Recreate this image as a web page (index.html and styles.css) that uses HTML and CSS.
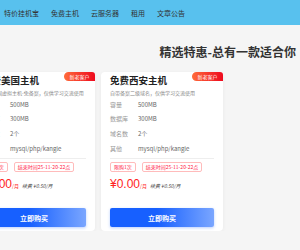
FILE: index.html
```html
<!DOCTYPE html>
<html>
<head>
  <meta charset="utf-8" />
  <title>精选特惠</title>
  <link rel="stylesheet" href="styles.css">
</head>
<body>
  <!-- Navigation -->
  <div class="nav">
    <a>特价挂机宝</a>
    <a>免费主机</a>
    <a>云服务器</a>
    <a>租用</a>
    <a>文章公告</a>
  </div>

  <div class="main">
    <h2 class="section-title">精选特惠-总有一款适合你</h2>

    <div class="cards">
      <div class="card">
        <span class="badge">新老客户</span>
        <h3>免费美国主机</h3>
        <p class="desc">免费美国虚拟主机-免备案，仅供学习交流使用</p>
        <div class="row"><span class="k">容量</span><span class="v">500MB</span></div>
        <div class="row"><span class="k">数据库</span><span class="v">300MB</span></div>
        <div class="row"><span class="k">域名数</span><span class="v">2个</span></div>
        <div class="row"><span class="k">其他</span><span class="v">mysql/php/kangle</span></div>
        <div class="tags">
          <span class="tag">限购1次</span>
          <span class="tag">结束时间25-11-20-22点</span>
        </div>
        <div class="price">
          <span class="num">¥0.00</span><span class="unit">/月</span>
          <span class="renew">续费 ¥0.50/月</span>
        </div>
        <button class="buy">立即购买</button>
      </div>

      <div class="card">
        <span class="badge">新老客户</span>
        <h3>免费西安主机</h3>
        <p class="desc">自带备案二级域名，仅供学习交流使用</p>
        <div class="row"><span class="k">容量</span><span class="v">500MB</span></div>
        <div class="row"><span class="k">数据库</span><span class="v">300MB</span></div>
        <div class="row"><span class="k">域名数</span><span class="v">2个</span></div>
        <div class="row"><span class="k">其他</span><span class="v">mysql/php/kangle</span></div>
        <div class="tags">
          <span class="tag">限购1次</span>
          <span class="tag">结束时间25-11-20-22点</span>
        </div>
        <div class="price">
          <span class="num">¥0.00</span><span class="unit">/月</span>
          <span class="renew">续费 ¥0.50/月</span>
        </div>
        <button class="buy">立即购买</button>
      </div>
    </div>
  </div>
</body>
</html>
```

FILE: styles.css
```css
/* Grundlayout */
html, body {
  margin: 0;
  padding: 0;
  font-family: "Noto Sans CJK SC", "Noto Sans", sans-serif;
  background: #f5f5f5;
  overflow: hidden;
}

/* Navigation oben */
.nav {
  display: flex;
  align-items: center;
  gap: 12px;
  height: 25px;
  padding-left: 4px;
  background: #58c1ee;
  font-size: 7px;
  color: #333;
}

.section-title {
  margin: 21px 4px 0 0;
  font-size: 12px;
  line-height: 12px;
  font-weight: 700;
  color: #333;
  text-align: right;
}

/* Karten */
.cards {
  display: flex;
  gap: 6px;
  margin: 14px 0 0 -27px;
}

.card {
  position: relative;
  display: flex;
  flex-direction: column;
  flex: none;
  width: 122px;
  height: 159px;
  padding: 2px 9px 0;
  box-sizing: border-box;
  background: #fff;
  border-radius: 4px;
  box-shadow: 0 1px 4px rgba(0, 0, 0, 0.05);
}

.badge {
  position: absolute;
  top: 0;
  right: 0;
  width: 31px;
  height: 9px;
  line-height: 9px;
  font-size: 5px;
  color: #fff;
  text-align: center;
  background: linear-gradient(90deg, #ff6b3b, #ee0a1e);
  border-radius: 6px 4px 0 6px;
}

.card h3 {
  margin: 0;
  font-size: 9.5px;
  line-height: 12px;
  font-weight: 600;
  color: #222;
}

.desc {
  margin: 3px 0 0;
  font-size: 5px;
  line-height: 8px;
  color: #888;
  white-space: nowrap;
}

.row {
  display: flex;
  height: 14.6px;
  align-items: center;
  font-size: 6px;
}

.row .k {
  width: 28px;
  color: #999;
}

.row .v {
  color: #666;
}

.tags {
  display: flex;
  gap: 6px;
  margin-top: 3px;
  padding-top: 3px;
  border-top: 1px solid #eee;
}

.tag {
  height: 8px;
  line-height: 8px;
  padding: 0 3px;
  font-size: 5px;
  color: #f24;
  border: 0.5px solid #fbb;
  border-radius: 2px;
  white-space: nowrap;
}

.price {
  display: flex;
  align-items: baseline;
  margin-top: 5px;
  line-height: 14px;
  color: #f22;
}

.price .num {
  font-family: "Liberation Sans", "Noto Sans CJK SC", sans-serif;
  font-size: 12px;
}

.price .unit {
  font-size: 5px;
  margin-right: 3px;
}

.price .renew {
  font-size: 5px;
  font-style: italic;
  color: #444;
}

/* Kauf-Button */
.buy {
  margin-top: auto;
  margin-bottom: 4px;
  height: 19px;
  padding: 0;
  font-family: inherit;
  font-size: 7px;
  font-weight: 700;
  color: #fff;
  border: none;
  border-radius: 2px;
  background: linear-gradient(90deg, #1760ff 45%, #7aa6ff);
  box-shadow: 0 1px 3px rgba(23, 96, 255, 0.3);
}
```
